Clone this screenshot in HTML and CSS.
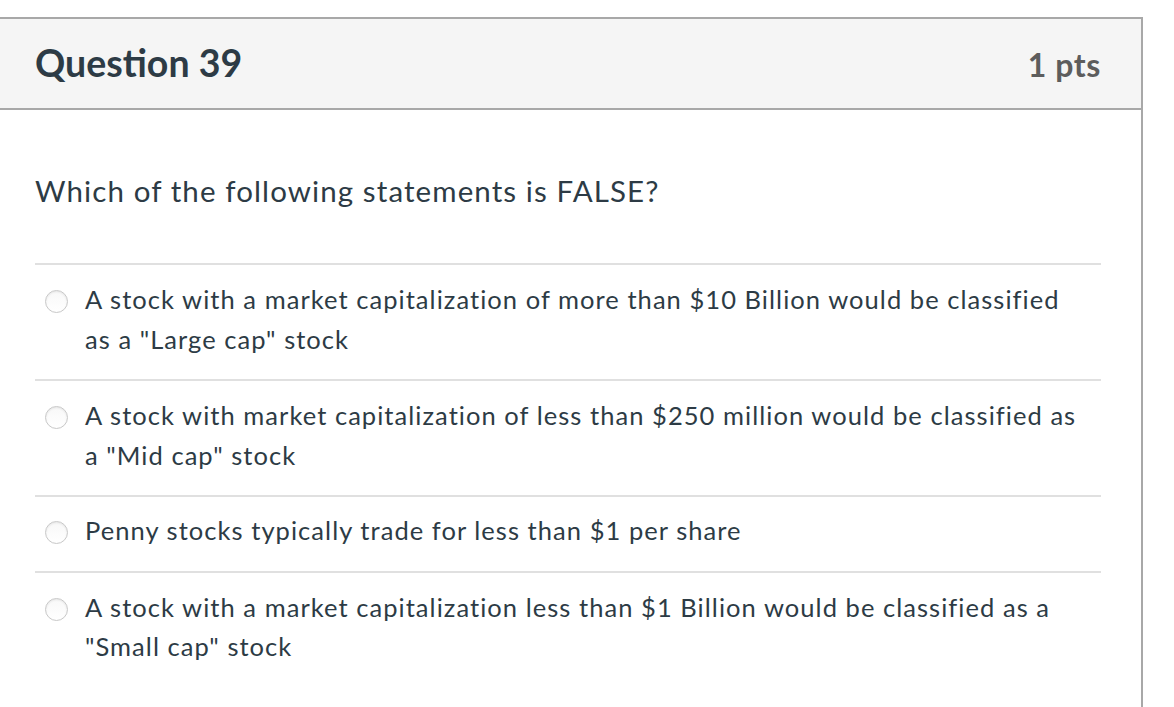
FILE: index.html
```html
<!DOCTYPE html>
<html>
<head>
<meta charset="utf-8">
<link rel="stylesheet" href="styles.css">
</head>
<body>
<div class="card">
  <div class="header">
    <h2 class="title">Question 39</h2>
    <div class="pts">1 pts</div>
  </div>
  <div class="content">
    <p class="question">Which of the following statements is FALSE?</p>
    <div class="answers">
      <div class="answer"><span class="radio"></span><span class="label">A stock with a market capitalization of more than $10 Billion would be classified as a "Large cap" stock</span></div>
      <div class="answer"><span class="radio"></span><span class="label">A stock with market capitalization of less than $250 million would be classified as a "Mid cap" stock</span></div>
      <div class="answer"><span class="radio"></span><span class="label">Penny stocks typically trade for less than $1 per share</span></div>
      <div class="answer"><span class="radio"></span><span class="label">A stock with a market capitalization less than $1 Billion would be classified as a "Small cap" stock</span></div>
    </div>
  </div>
</div>
</body>
</html>
```
FILE: styles.css
```css
html, body {
  margin: 0;
  padding: 0;
  background: #fff;
}
body {
  font-family: Lato, "Open Sans", sans-serif;
  color: #2d3b45;
  overflow: hidden;
  height: 707px;
}
.card {
  margin-top: 17px;
  margin-left: -2px;
  width: 1145px;
  border: 2px solid #a8a8a8;
  border-bottom: none;
  height: 720px;
  box-sizing: border-box;
}
.header {
  height: 89px;
  background: #f5f5f5;
  border-bottom: 2px solid #a8a8a8;
  display: flex;
  align-items: center;
  justify-content: space-between;
  padding: 0 40px 0 35px;
}
.title {
  margin: 0;
  font-size: 37.5px;
  font-weight: 700;
  color: #2d3b45;
  padding-bottom: 2px;
}
.pts {
  font-size: 32px;
  font-weight: 700;
  letter-spacing: 0.6px;
  color: #5d5d5d;
  padding-top: 2px;
}
.content {
  padding: 61px 40px 0 35px;
}
.question {
  margin: 0 0 52px 0;
  font-size: 29.5px;
  letter-spacing: 1.1px;
  line-height: 40px;
}
.answer {
  border-top: 2px solid #e0e0e0;
  display: flex;
  align-items: flex-start;
  padding: 15px 14px 20px 0;
}
.answer:nth-child(3) {
  padding-top: 14px;
  padding-bottom: 20px;
}
.radio {
  flex: none;
  width: 21px;
  height: 21px;
  margin: 10px 17px 0 10px;
  border-radius: 50%;
  border: 1px solid #c8c8c8;
  background: linear-gradient(#f8f8f8, #ffffff);
  box-shadow: inset 0 1px 2px rgba(0,0,0,0.08);
}
.label {
  font-size: 25.5px;
  letter-spacing: 1.05px;
  line-height: 39.5px;
  color: #2d3b45;
}
```
